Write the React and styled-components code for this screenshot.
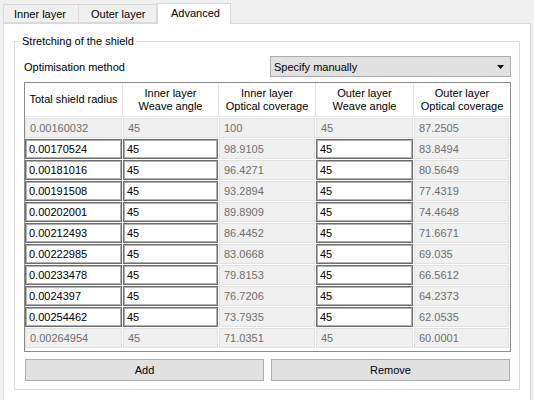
import React from "react";
import styled, { createGlobalStyle } from "styled-components";

const Global = createGlobalStyle`
  html, body { margin: 0; padding: 0; background: #f0f0f0; }
  body { font-family: "Liberation Sans", Arial, sans-serif; font-size: 11px; color: #000; }
`;

const Root = styled.div`
  width: 534px;
  height: 400px;
  overflow: hidden;
  padding: 3px 3px 0 3px;
  box-sizing: border-box;
  display: flex;
  flex-direction: column;
`;

const TabBar = styled.div`
  display: flex;
  align-items: flex-end;
  height: 20px;
`;

const Tab = styled.div`
  box-sizing: border-box;
  height: ${(p) => (p.$active ? "21px" : "19px")};
  margin-bottom: ${(p) => (p.$active ? "-1px" : "0")};
  width: ${(p) => p.$w}px;
  padding-left: ${(p) => p.$pl}px;
  display: flex;
  align-items: center;
  border: 1px solid #d9d9d9;
  border-bottom: ${(p) => (p.$active ? "none" : "1px solid #d9d9d9")};
  border-left: ${(p) => (p.$first || p.$active ? "1px solid #d9d9d9" : "none")};
  background: ${(p) => (p.$active ? "#ffffff" : "#f0f0f0")};
  position: relative;
  z-index: ${(p) => (p.$active ? 2 : 1)};
  padding-bottom: ${(p) => (p.$active ? "2px" : "0")};
`;

const Pane = styled.div`
  box-sizing: border-box;
  height: 390px;
  flex-shrink: 0;
  background: #ffffff;
  border: 1px solid #d9d9d9;
  padding: 10px 10px 0 10px;
  position: relative;
  z-index: 1;
`;

const Group = styled.fieldset`
  margin: 0;
  border: 1px solid #dcdcdc;
  padding: 8px 8px 8px 9px;
  display: flex;
  flex-direction: column;
`;

const Legend = styled.legend`
  margin-left: -4px;
  padding: 0 2px;
  line-height: 14px;
  font-size: 11px;
`;

const MethodRow = styled.div`
  display: flex;
  align-items: center;
  height: 21px;
`;

const Label = styled.div`
  flex: 1;
`;

const Combo = styled.div`
  box-sizing: border-box;
  width: 241px;
  height: 21px;
  background: #e1e1e1;
  border: 1px solid #adadad;
  display: flex;
  align-items: center;
  padding: 0 6px 0 3px;
`;

const ComboText = styled.span`
  flex: 1;
`;

const Arrow = styled.svg`
  width: 7px;
  height: 4px;
  display: block;
`;

const Table = styled.div`
  margin-top: 5px;
  box-sizing: border-box;
  height: 270px;
  border: 1px solid #8c8c8c;
  background: #ffffff;
`;

const Grid = styled.div`
  display: grid;
  grid-template-columns: 98px 96px 97px 98px 96px;
`;

const HeaderCell = styled.div`
  box-sizing: border-box;
  height: 34px;
  display: flex;
  align-items: center;
  justify-content: center;
  text-align: center;
  line-height: 13px;
  border-right: ${(p) => (p.$last ? "none" : "1px solid #e5e5e5")};
  border-bottom: 1px solid #e5e5e5;
`;

const DataCell = styled.div`
  box-sizing: border-box;
  height: 20px;
  margin: 1px 1px 0 0;
  display: flex;
  align-items: center;
  padding-left: ${(p) => (p.$edit ? "3px" : "4px")};
  background: ${(p) => (p.$edit ? "#ffffff" : "#f0f0f0")};
  border: 1px solid ${(p) => (p.$edit ? "#6e6e6e" : "#e0e0e0")};
  box-shadow: ${(p) => (p.$edit ? "inset 0 0 0 1px #b0b0b0" : "none")};
  color: ${(p) => (p.$edit ? "#000000" : "#6d6d6d")};
`;

const Buttons = styled.div`
  margin-top: 7px;
  display: flex;
  gap: 7px;
  padding: 0 1px;
`;

const Button = styled.div`
  box-sizing: border-box;
  flex: 1;
  height: 22px;
  background: #e1e1e1;
  border: 1px solid #adadad;
  display: flex;
  align-items: center;
  justify-content: center;
`;

const headers = [
  ["Total shield radius"],
  ["Inner layer", "Weave angle"],
  ["Inner layer", "Optical coverage"],
  ["Outer layer", "Weave angle"],
  ["Outer layer", "Optical coverage"],
];

const rows = [
  ["0.00160032", "45", "100", "45", "87.2505"],
  ["0.00170524", "45", "98.9105", "45", "83.8494"],
  ["0.00181016", "45", "96.4271", "45", "80.5649"],
  ["0.00191508", "45", "93.2894", "45", "77.4319"],
  ["0.00202001", "45", "89.8909", "45", "74.4648"],
  ["0.00212493", "45", "86.4452", "45", "71.6671"],
  ["0.00222985", "45", "83.0668", "45", "69.035"],
  ["0.00233478", "45", "79.8153", "45", "66.5612"],
  ["0.0024397", "45", "76.7206", "45", "64.2373"],
  ["0.00254462", "45", "73.7935", "45", "62.0535"],
  ["0.00264954", "45", "71.0351", "45", "60.0001"],
];

export default function App() {
  return (
    <>
      <Global />
      <Root>
        <TabBar>
          <Tab $first $w={76} $pl={10}>Inner layer</Tab>
          <Tab $w={78} $pl={12}>Outer layer</Tab>
          <Tab $active $w={74} $pl={13}>Advanced</Tab>
        </TabBar>
        <Pane>
          <Group>
            <Legend>Stretching of the shield</Legend>
            <MethodRow>
              <Label>Optimisation method</Label>
              <Combo>
                <ComboText>Specify manually</ComboText>
                <Arrow viewBox="0 0 7 4">
                  <path d="M0 0 H7 L3.5 4 Z" fill="#000" />
                </Arrow>
              </Combo>
            </MethodRow>
            <Table>
              <Grid>
                {headers.map((h, i) => (
                  <HeaderCell key={i} $last={i === 4}>
                    <div>
                      {h.map((l, j) => (
                        <div key={j}>{l}</div>
                      ))}
                    </div>
                  </HeaderCell>
                ))}
                {rows.map((r, ri) =>
                  r.map((v, ci) => {
                    const edit = ri > 0 && ri < rows.length - 1 && (ci === 0 || ci === 1 || ci === 3);
                    return (
                      <DataCell key={ri + "-" + ci} $edit={edit}>
                        {v}
                      </DataCell>
                    );
                  })
                )}
              </Grid>
            </Table>
            <Buttons>
              <Button>Add</Button>
              <Button>Remove</Button>
            </Buttons>
          </Group>
        </Pane>
      </Root>
    </>
  );
}
